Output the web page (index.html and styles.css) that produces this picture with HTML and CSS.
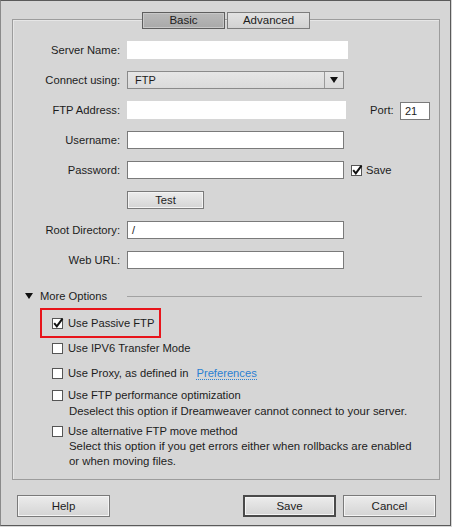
FILE: index.html
```html
<!DOCTYPE html>
<html>
<head>
<meta charset="utf-8">
<link rel="stylesheet" href="styles.css">
</head>
<body>
<div class="dialog">
  <div class="tabs">
    <span class="tab tab-active">Basic</span>
    <span class="tab">Advanced</span>
  </div>
  <div class="panel">
    <div class="form">
      <span class="lbl">Server Name:</span>
      <span class="input input-plain w-221"></span>

      <span class="lbl">Connect using:</span>
      <span class="select"><span class="select-val">FTP</span><span class="select-btn"><span class="arrow"></span></span></span>

      <span class="lbl">FTP Address:</span>
      <span class="input input-plain w-219"></span>
      <span class="port"><span class="port-lbl">Port:</span><span class="input port-input">21</span></span>

      <span class="lbl">Username:</span>
      <span class="input"></span>

      <span class="lbl">Password:</span>
      <span class="input"></span>
      <span class="check-inline"><span class="cb"><svg width="13" height="13" viewBox="0 0 13 13"><path d="M2.2 6.2 L4.8 9.3 L10.5 1.6" fill="none" stroke="#111" stroke-width="2"/></svg></span><span>Save</span></span>

      <span class="btn btn-test">Test</span>

      <span class="lbl">Root Directory:</span>
      <span class="input">/</span>

      <span class="lbl">Web URL:</span>
      <span class="input"></span>
    </div>

    <div class="more">
      <span class="tri"></span>
      <span class="more-text">More Options</span>
      <span class="more-line"></span>
    </div>

    <div class="options">
      <div class="opt opt-hl">
        <span class="cb"><svg width="13" height="13" viewBox="0 0 13 13"><path d="M2.2 6.2 L4.8 9.3 L10.5 1.6" fill="none" stroke="#111" stroke-width="2"/></svg></span>
        <span>Use Passive FTP</span>
      </div>
      <div class="opt opt-2">
        <span class="cb"></span>
        <span>Use IPV6 Transfer Mode</span>
      </div>
      <div class="opt opt-3">
        <span class="cb"></span>
        <span>Use Proxy, as defined in</span>
        <span class="link">Preferences</span>
      </div>
      <div class="opt opt-4">
        <span class="cb"></span>
        <span>Use FTP performance optimization</span>
      </div>
      <div class="desc desc-4">Deselect this option if Dreamweaver cannot connect to your server.</div>
      <div class="opt opt-5">
        <span class="cb"></span>
        <span>Use alternative FTP move method</span>
      </div>
      <div class="desc">Select this option if you get errors either when rollbacks are enabled<br>or when moving files.</div>
    </div>
  </div>

  <div class="footer">
    <span class="btn btn-foot">Help</span>
    <div class="footer-right">
      <span class="btn btn-foot btn-default">Save</span>
      <span class="btn btn-foot">Cancel</span>
    </div>
  </div>
</div>
</body>
</html>
```

FILE: styles.css
```css
html, body {
  margin: 0;
  padding: 0;
  background: #d6d6d6;
}

body {
  font-family: "Liberation Sans", Arial, sans-serif;
  font-size: 11px;
  color: #1c1c1c;
}

.dialog {
  box-sizing: border-box;
  width: 451px;
  height: 526px;
  border: 1px solid #5a5a5a;
  border-left-color: #8a8a8a;
  background: #d6d6d6;
  overflow: hidden;
}

.tabs {
  position: relative;
  z-index: 1;
  display: flex;
  justify-content: center;
  gap: 2px;
  margin-top: 11px;
  margin-left: 1px;
  height: 17px;
}

.tab {
  box-sizing: border-box;
  width: 83px;
  height: 17px;
  line-height: 15px;
  text-align: center;
  border: 1px solid #7c7c7c;
  background: linear-gradient(#e2e2e2, #d2d2d2);
  color: #1c1c1c;
  font-size: 11.5px;
}

.tab-active {
  border-color: #5e5e5e;
  background: linear-gradient(#b9b9b9, #a9a9a9);
  box-shadow: inset 0 0 0 1px #c8c8c8;
}

.panel {
  box-sizing: border-box;
  width: 428px;
  height: 461px;
  margin-top: -10px;
  margin-left: 11px;
  border: 1px solid #9c9c9c;
  box-shadow: inset 1px 1px 0 #e6e6e6;
}

.form {
  display: grid;
  grid-template-columns: 107px 217px auto;
  grid-auto-rows: 18px;
  column-gap: 7px;
  row-gap: 12px;
  align-items: center;
  padding-top: 21px;
}

.lbl {
  grid-column: 1;
  text-align: right;
  font-size: 11.2px;
}

.input {
  grid-column: 2;
  box-sizing: border-box;
  height: 18px;
  width: 217px;
  background: #fff;
  border: 1px solid #7a7a7a;
  padding-left: 4px;
  line-height: 16px;
}

.input-plain {
  border-color: #fff;
}

.w-221 { width: 221px; }
.w-219 { width: 219px; }

.select {
  grid-column: 2;
  box-sizing: border-box;
  width: 217px;
  height: 18px;
  display: flex;
  border: 1px solid #8a8a8a;
  background: linear-gradient(#e6e6e6, #dadada);
}

.select-val {
  flex: 1;
  padding-left: 7px;
  line-height: 16px;
}

.select-btn {
  width: 18px;
  border-left: 1px solid #9a9a9a;
  display: flex;
  align-items: center;
  justify-content: center;
}

.arrow {
  width: 0;
  height: 0;
  border-left: 4px solid transparent;
  border-right: 4px solid transparent;
  border-top: 6px solid #111;
}

.port {
  grid-column: 3;
  display: flex;
  align-items: center;
  padding-left: 19px;
}

.port-lbl {
  width: 30px;
  font-size: 11.2px;
}

.port-input {
  width: 30px;
  height: 18px;
  margin-top: 1px;
  padding-left: 4px;
}

.check-inline {
  grid-column: 3;
  display: flex;
  align-items: center;
  gap: 4px;
  font-size: 11.2px;
}

.cb {
  box-sizing: border-box;
  width: 11px;
  height: 11px;
  background: #fff;
  border: 1px solid #555;
  flex: none;
  position: relative;
}

.cb svg {
  position: absolute;
  left: -1px;
  top: -2px;
}

.btn {
  box-sizing: border-box;
  display: flex;
  align-items: center;
  justify-content: center;
  border: 1px solid #7a7a7a;
  background: linear-gradient(#ececec, #d4d4d4);
  box-shadow: inset 0 0 0 1px #f4f4f4;
}

.btn-test {
  grid-column: 2;
  width: 77px;
  height: 18px;
  font-size: 11.2px;
}

.more {
  display: flex;
  align-items: center;
  height: 14px;
  margin-top: 20px;
  padding-left: 12px;
  padding-right: 17px;
}

.tri {
  width: 0;
  height: 0;
  border-left: 4px solid transparent;
  border-right: 4px solid transparent;
  border-top: 6px solid #111;
  margin-right: 7px;
}

.more-text {
  font-size: 11.2px;
}

.more-line {
  flex: 1;
  height: 1px;
  background: #a2a2a2;
  margin-left: 20px;
}

.options {
  padding-left: 39px;
}

.opt {
  display: flex;
  align-items: center;
  gap: 5px;
  height: 16px;
  font-size: 11.2px;
}

.opt-hl {
  box-sizing: border-box;
  width: 121px;
  height: 30px;
  margin-top: 5px;
  margin-left: -12px;
  padding-left: 10px;
  border: 2px solid #e8141b;
}

.opt-2 { margin-top: 2px; }
.opt-3 { margin-top: 9px; }
.opt-4 { margin-top: 6px; }
.opt-5 { margin-top: 4px; }

.link {
  color: #2a80d2;
  margin-left: 3px;
  border-bottom: 1px dotted #2a80d2;
  line-height: 12px;
}

.desc {
  padding-left: 17px;
  line-height: 15px;
  font-size: 11.4px;
}

.desc-4 { margin-top: 1px; }

.footer {
  display: flex;
  justify-content: space-between;
  margin-top: 15px;
  padding-left: 16px;
  padding-right: 14px;
}

.footer-right {
  display: flex;
  gap: 7px;
}

.btn-foot {
  width: 93px;
  height: 22px;
  font-size: 11.5px;
}

.btn-default {
  border: 2px solid #4a4a4a;
}
```
